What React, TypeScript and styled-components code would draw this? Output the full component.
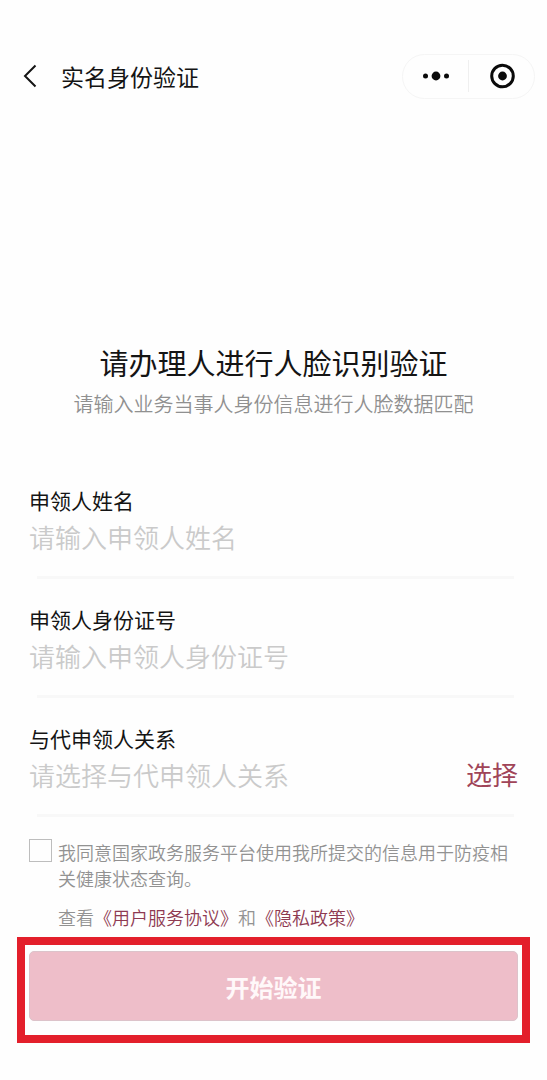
import React from "react";
import styled, { createGlobalStyle } from "styled-components";

const GlobalStyle = createGlobalStyle`
  * { box-sizing: border-box; }
  body {
    margin: 0;
    background: #fefefe;
    color: #141414;
    font-family: "Noto Sans CJK SC", "Noto Sans", sans-serif;
    font-weight: 350;
  }
  button, input {
    font-family: inherit;
    font-weight: inherit;
    margin: 0;
    padding: 0;
    border: 0;
    background: none;
    color: inherit;
  }
  button { cursor: pointer; }
`;

const Page = styled.div`
  min-height: 100vh;
  padding-bottom: 36px;
`;

const NavBar = styled.header`
  display: flex;
  align-items: center;
  height: 44px;
  margin-top: 54px;
  padding: 0 12px 0 16px;
`;

const BackButton = styled.button`
  display: flex;
  align-items: center;
  justify-content: center;
  width: 28px;
  height: 32px;
`;

const NavTitle = styled.h1`
  flex: 1;
  margin: 0 0 0 17px;
  font-size: 23px;
  line-height: 32px;
  font-weight: 400;
`;

const Capsule = styled.div`
  display: flex;
  align-items: center;
  width: 133px;
  height: 45px;
  border: 1px solid #f5f5f5;
  border-radius: 23px;
`;

const CapsuleButton = styled.button`
  flex: 1;
  display: flex;
  align-items: center;
  justify-content: center;
  height: 32px;

  & + & {
    border-left: 1px solid #efefef;
  }
`;

const Main = styled.main`
  padding: 0 17px;
`;

const Intro = styled.section`
  padding-top: 244px;
  text-align: center;
`;

const Heading = styled.h2`
  margin: 0;
  font-size: 29px;
  line-height: 40px;
  font-weight: 400;
`;

const Subtitle = styled.p`
  margin: 8px 0 0;
  font-size: 20px;
  line-height: 28px;
  color: #909090;
`;

const Form = styled.form`
  margin-top: 68px;
`;

const Field = styled.div`
  margin: 0 12px 26px;
`;

const Label = styled.label`
  display: block;
  font-size: 21px;
  line-height: 28px;
  font-weight: 400;
`;

const InputRow = styled.div`
  display: flex;
  align-items: center;
  height: 36px;
  margin: 4px 0 22px;
`;

const TextInput = styled.input`
  flex: 1;
  min-width: 0;
  height: 36px;
  font-size: 26px;
  outline: none;

  &::placeholder {
    color: #cacaca;
    opacity: 1;
  }
`;

const ChooseButton = styled.button`
  font-size: 26px;
  line-height: 36px;
  font-weight: 400;
  color: #a04458;
`;

const Divider = styled.hr`
  height: 3px;
  margin: 0 4px 0 8px;
  border: 0;
  background: #f8f8f8;
`;

const Agreement = styled.div`
  display: flex;
  align-items: flex-start;
  margin: -4px 12px 0;
  font-size: 18px;
  line-height: 26px;
  color: #929292;
`;

const Checkbox = styled.input`
  appearance: none;
  flex: none;
  width: 23px;
  height: 23px;
  margin-right: 6px;
  border: 1px solid #bdbdbd;
  background: #fefefe;

  &:checked {
    background: #a04458;
  }
`;

const Terms = styled.p`
  margin: 13px 12px 0 41px;
  font-size: 18px;
  line-height: 26px;
  color: #929292;
`;

const TermsLink = styled.a`
  color: #8e3a52;
  text-decoration: none;
`;

const Highlight = styled.div`
  margin-top: 7px;
  padding: 6px 4px 14px;
  border: 8px solid #e31f2b;
`;

const SubmitButton = styled.button`
  display: block;
  width: 100%;
  height: 70px;
  border: 1px solid #dcc3ca;
  border-radius: 5px;
  background: #eebec9;
  font-size: 24px;
  font-weight: 700;
  color: #fff8f9;
`;

type FormFieldProps = {
  id: string;
  label: string;
  placeholder: string;
  choosable?: boolean;
};

function FormField({ id, label, placeholder, choosable }: FormFieldProps) {
  return (
    <Field>
      <Label htmlFor={id}>{label}</Label>
      <InputRow>
        <TextInput id={id} type="text" placeholder={placeholder} readOnly={choosable} />
        {choosable && <ChooseButton type="button">选择</ChooseButton>}
      </InputRow>
      <Divider />
    </Field>
  );
}

export default function App() {
  return (
    <>
      <GlobalStyle />
      <Page>
        <NavBar>
          <BackButton type="button" aria-label="返回">
            <svg width="14" height="24" viewBox="0 0 14 24" fill="none" stroke="#141414" strokeWidth="2">
              <path d="M12.5 1.5 2 12l10.500 10.500" />
            </svg>
          </BackButton>
          <NavTitle>实名身份验证</NavTitle>
          <Capsule>
            <CapsuleButton type="button" aria-label="更多">
              <svg width="28" height="10" viewBox="0 0 28 10" fill="#0a0a0a">
                <circle cx="3.500" cy="5" r="2.500" />
                <circle cx="14" cy="5" r="4.400" />
                <circle cx="24.500" cy="5" r="2.500" />
              </svg>
            </CapsuleButton>
            <CapsuleButton type="button" aria-label="关闭">
              <svg width="26" height="26" viewBox="0 0 26 26">
                <circle cx="13.500" cy="13" r="10.800" fill="none" stroke="#0a0a0a" strokeWidth="3" />
                <circle cx="13.500" cy="13" r="4.400" fill="#0a0a0a" />
              </svg>
            </CapsuleButton>
          </Capsule>
        </NavBar>
        <Main>
          <Intro>
            <Heading>请办理人进行人脸识别验证</Heading>
            <Subtitle>请输入业务当事人身份信息进行人脸数据匹配</Subtitle>
          </Intro>
          <Form onSubmit={(event) => event.preventDefault()}>
            <FormField id="name" label="申领人姓名" placeholder="请输入申领人姓名" />
            <FormField id="id-number" label="申领人身份证号" placeholder="请输入申领人身份证号" />
            <FormField id="relation" label="与代申领人关系" placeholder="请选择与代申领人关系" choosable />
            <Agreement>
              <Checkbox id="agree" type="checkbox" />
              <label htmlFor="agree">
                我同意国家政务服务平台使用我所提交的信息用于防疫相关健康状态查询。
              </label>
            </Agreement>
            <Terms>
              查看<TermsLink href="#agreement">《用户服务协议》</TermsLink>和
              <TermsLink href="#privacy">《隐私政策》</TermsLink>
            </Terms>
            <Highlight>
              <SubmitButton type="submit">开始验证</SubmitButton>
            </Highlight>
          </Form>
        </Main>
      </Page>
    </>
  );
}
